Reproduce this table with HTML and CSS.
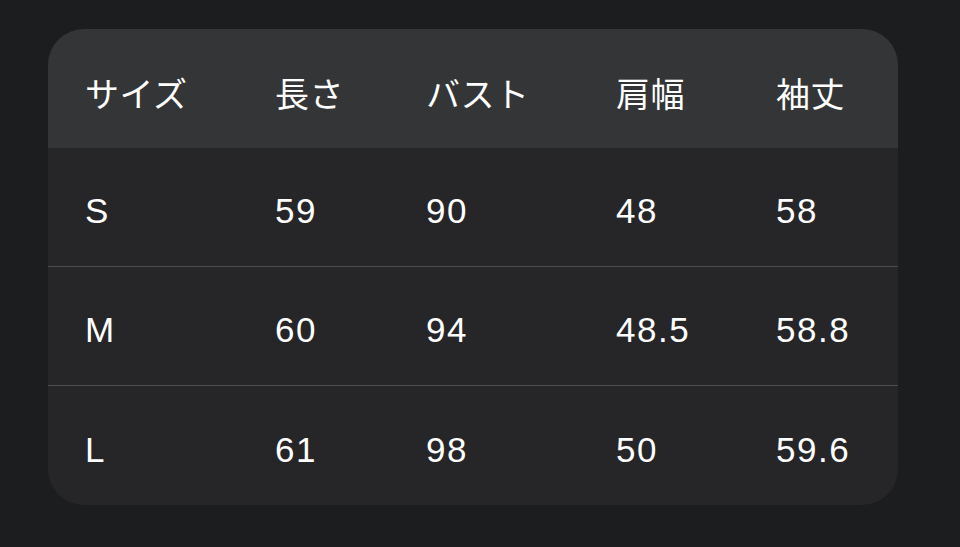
FILE: index.html
```html
<!DOCTYPE html>
<html lang="ja">
<head>
<meta charset="utf-8">
<link rel="stylesheet" href="styles.css">
</head>
<body>
<div class="card">
  <div class="row head">
    <div>サイズ</div><div>長さ</div><div>バスト</div><div>肩幅</div><div>袖丈</div>
  </div>
  <div class="row">
    <div>S</div><div>59</div><div>90</div><div>48</div><div>58</div>
  </div>
  <div class="row">
    <div>M</div><div>60</div><div>94</div><div>48.5</div><div>58.8</div>
  </div>
  <div class="row last">
    <div>L</div><div>61</div><div>98</div><div>50</div><div>59.6</div>
  </div>
</div>
</body>
</html>
```
FILE: styles.css
```css
html, body {
  margin: 0;
  padding: 0;
  background: #1c1d1f;
  width: 960px;
  height: 547px;
  overflow: hidden;
}
body {
  font-family: "Liberation Sans", "Noto Sans CJK JP", sans-serif;
  color: #ffffff;
}
.card {
  margin: 29px 0 0 48px;
  width: 850px;
  background: #262628;
  border-radius: 36px;
  overflow: hidden;
}
.row {
  display: grid;
  grid-template-columns: 190px 151px 190px 160px 1fr;
  padding: 8px 0 0 37px;
  height: 110px;
  align-items: center;
  font-size: 35px;
  letter-spacing: 1.5px;
  border-bottom: 1px solid #4d4d4f;
}
.row.head {
  background: #343537;
  height: 111px;
  border-bottom: none;
  letter-spacing: 0.5px;
  font-size: 34px;
}
.row.last {
  border-bottom: none;
  height: 111px;
}
```
